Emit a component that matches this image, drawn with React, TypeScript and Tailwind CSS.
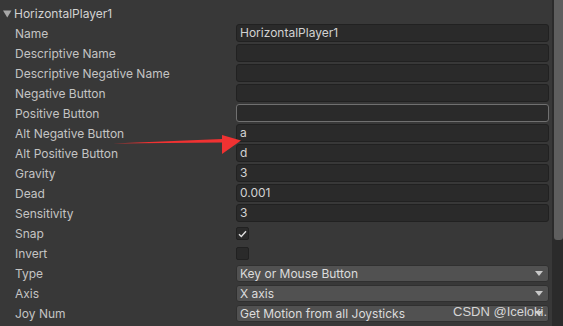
import React from 'react';

type Row =
  | { label: string; kind: 'text'; value?: string; focused?: boolean }
  | { label: string; kind: 'check'; checked: boolean }
  | { label: string; kind: 'select'; value: string };

const rows: Row[] = [
  { label: 'Name', kind: 'text', value: 'HorizontalPlayer1' },
  { label: 'Descriptive Name', kind: 'text' },
  { label: 'Descriptive Negative Name', kind: 'text' },
  { label: 'Negative Button', kind: 'text' },
  { label: 'Positive Button', kind: 'text', focused: true },
  { label: 'Alt Negative Button', kind: 'text', value: 'a' },
  { label: 'Alt Positive Button', kind: 'text', value: 'd' },
  { label: 'Gravity', kind: 'text', value: '3' },
  { label: 'Dead', kind: 'text', value: '0.001' },
  { label: 'Sensitivity', kind: 'text', value: '3' },
  { label: 'Snap', kind: 'check', checked: true },
  { label: 'Invert', kind: 'check', checked: false },
  { label: 'Type', kind: 'select', value: 'Key or Mouse Button' },
  { label: 'Axis', kind: 'select', value: 'X axis' },
  { label: 'Joy Num', kind: 'select', value: 'Get Motion from all Joysticks' },
];

function Field({ row }: { row: Row }) {
  if (row.kind === 'text') {
    return (
      <div
        className={`h-[18px] flex-1 rounded-[3px] border bg-[#2a2a2a] px-[3px] text-[12px] leading-[16px] text-[#d2d2d2] ${
          row.focused ? 'border-[#707070]' : 'border-[#212121]'
        }`}
      >
        {row.value}
      </div>
    );
  }
  if (row.kind === 'check') {
    return (
      <div className="mt-[3px] flex h-[13px] w-[13px] items-center justify-center rounded-[2px] border border-[#212121] bg-[#2a2a2a]">
        {row.checked && (
          <svg width="9" height="8" viewBox="0 0 9 8">
            <path d="M1 4.2 L3.3 6.4 L8 1.3" fill="none" stroke="#e0e0e0" strokeWidth="1.4" />
          </svg>
        )}
      </div>
    );
  }
  return (
    <div className="mt-px flex h-[17px] flex-1 items-center justify-between rounded-[3px] border border-[#303030] bg-[#515151] pl-[3px] pr-[5px] text-[12px] text-[#dcdcdc]">
      <span>{row.value}</span>
      <svg width="8" height="5" viewBox="0 0 8 5">
        <path d="M0 0 H8 L4 5 Z" fill="#c8c8c8" />
      </svg>
    </div>
  );
}

export default function App() {
  return (
    <div className="relative flex h-[326px] w-[563px] overflow-hidden bg-[#383838] font-['Inter',sans-serif]">
      <div className="flex-1 pr-[3px] pt-[4px]">
        <div className="flex h-5 items-center">
          <svg width="9" height="8" viewBox="0 0 9 8" className="ml-[3px]">
            <path d="M0 0.5 H8.5 L4.25 7.5 Z" fill="#a8a8a8" />
          </svg>
          <span className="ml-[2px] text-[12px] text-[#d2d2d2]">HorizontalPlayer1</span>
        </div>
        {rows.map((row) => (
          <div key={row.label} className="flex h-5 items-start">
            <div className="w-[236px] shrink-0 pl-[15px] text-[12px] leading-5 text-[#c4c4c4]">{row.label}</div>
            <Field row={row} />
          </div>
        ))}
      </div>
      <div className="flex w-[11px] shrink-0 bg-[#2b2b2b]">
        <div className="ml-[2px] h-[240px] w-[9px] rounded-b-[3px] bg-[#5e5e5e]" />
      </div>

      {/* annotation arrow */}
      <svg className="pointer-events-none absolute left-0 top-0" width="563" height="326">
        <path d="M113 143.5 L222 139 L222 142.5 Z" fill="#f03232" />
        <path d="M222 135 L241 140.5 L222 154 Z" fill="#f03232" />
      </svg>
      <div className="pointer-events-none absolute left-[453px] top-[302px] text-[13px] text-[#d6d6d6] font-['Liberation_Sans',sans-serif]">
        CSDN @Iceloki.
      </div>
    </div>
  );
}
